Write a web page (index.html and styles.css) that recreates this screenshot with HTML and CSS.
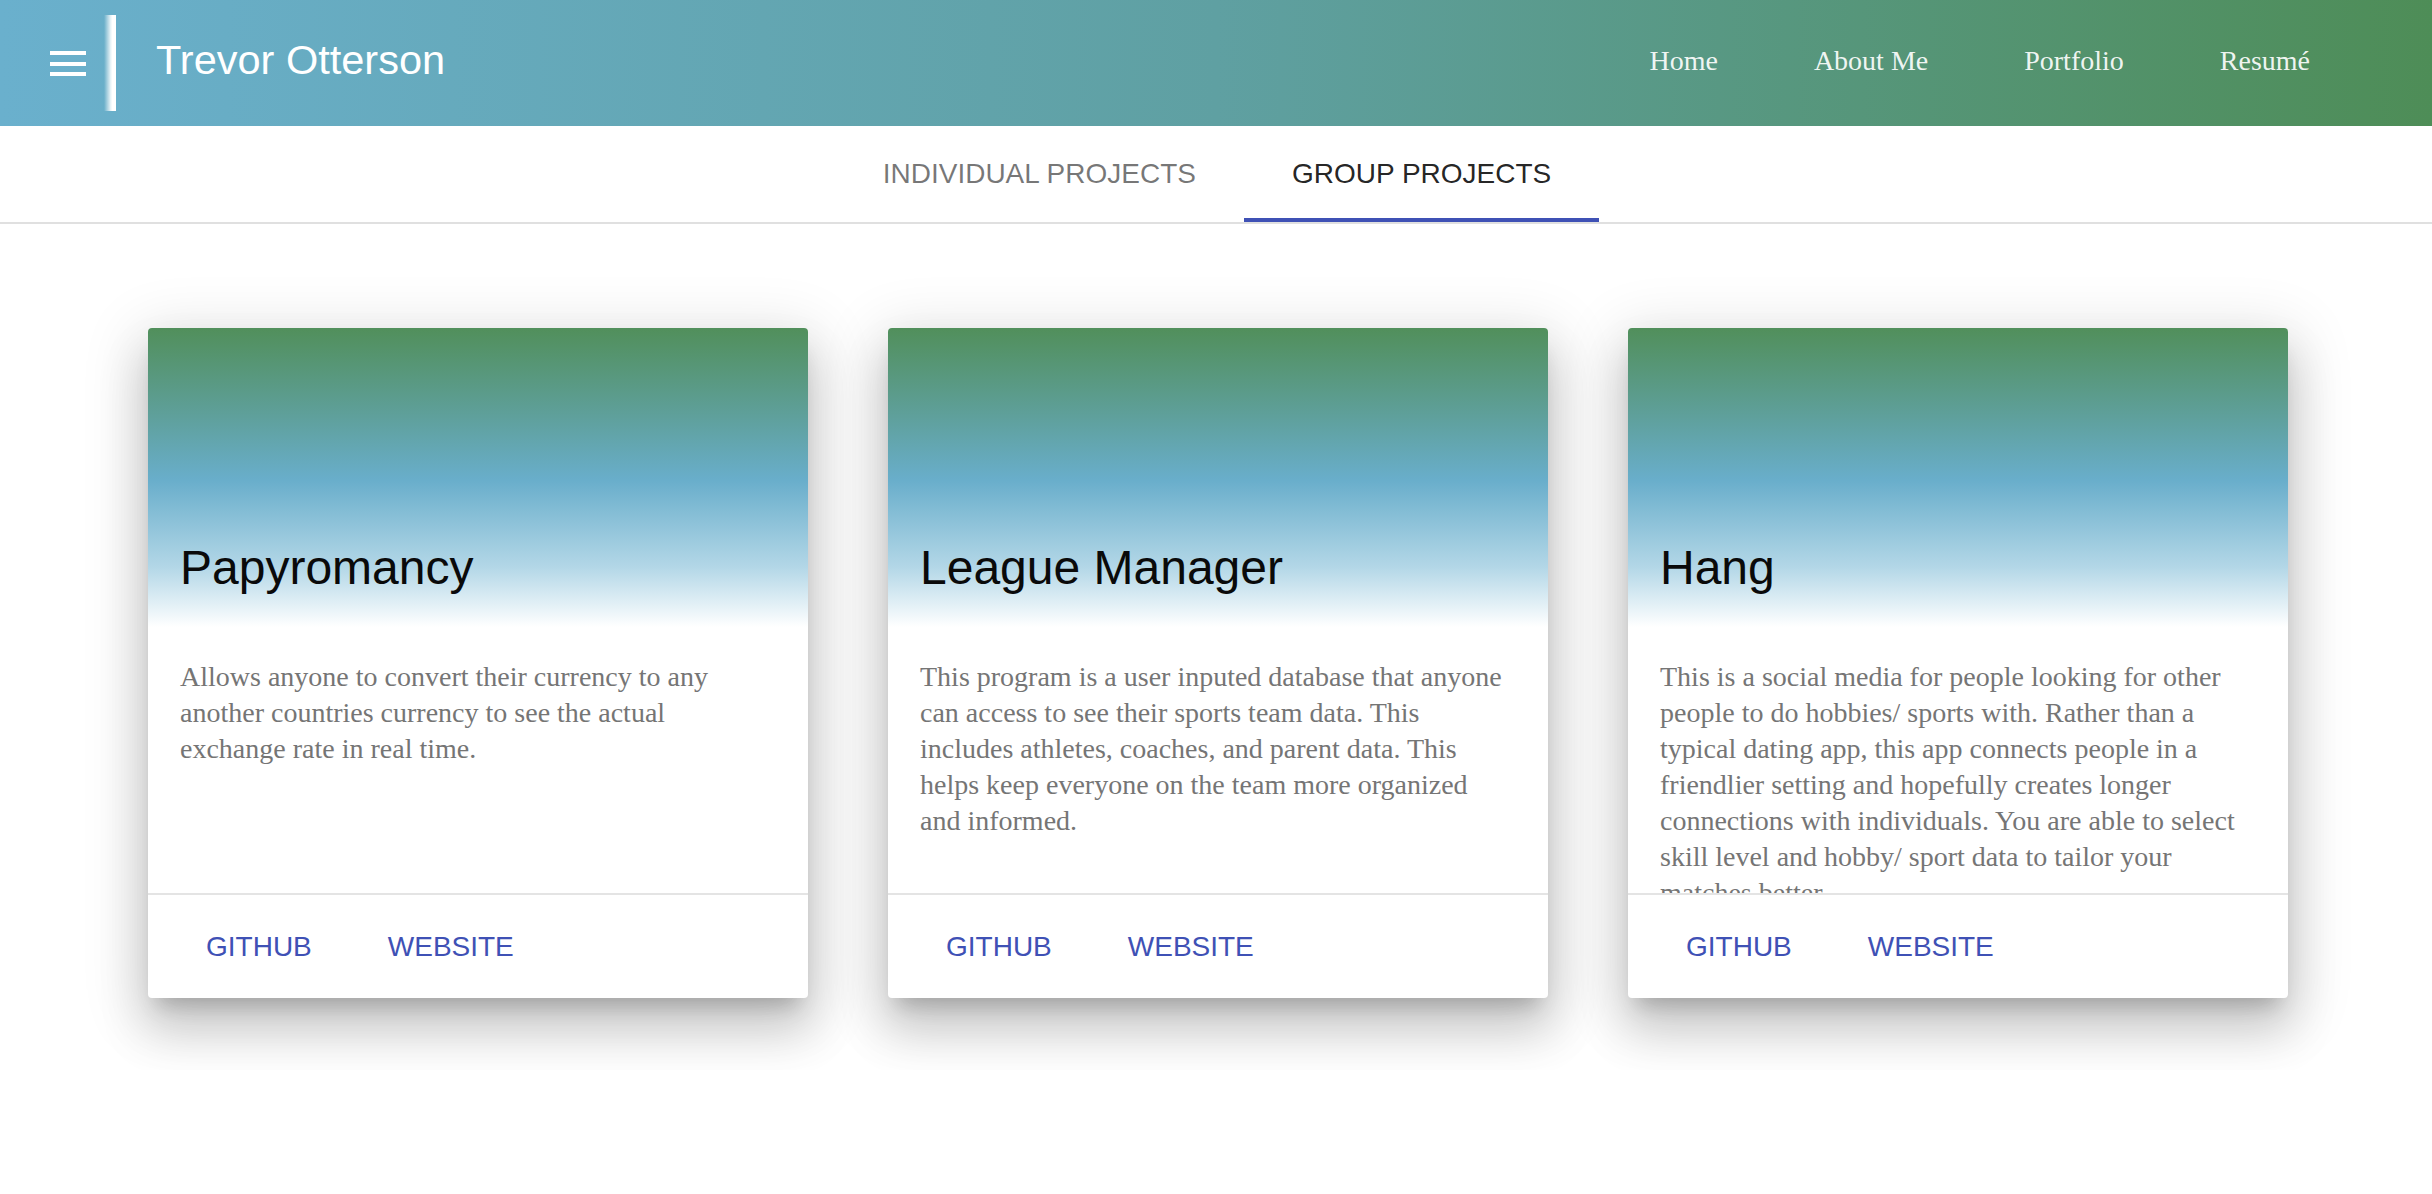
FILE: index.html
```html
<!DOCTYPE html>
<html lang="en">
<head>
<meta charset="utf-8">
<title>Trevor Otterson - Portfolio</title>
<link rel="stylesheet" href="styles.css">
</head>
<body>
<header class="header">
  <div class="drawer-btn">
    <svg class="menu-icon" width="36" height="26" viewBox="0 0 36 26" aria-hidden="true">
      <rect x="0" y="0" width="36" height="4" fill="#fff"/>
      <rect x="0" y="11" width="36" height="4" fill="#fff"/>
      <rect x="0" y="21" width="36" height="4" fill="#fff"/>
    </svg>
  </div>
  <div class="drawer-bar"></div>
  <div class="site-title">Trevor Otterson</div>
  <nav class="nav">
    <a class="nav-link" href="#">Home</a>
    <a class="nav-link" href="#">About Me</a>
    <a class="nav-link" href="#">Portfolio</a>
    <a class="nav-link" href="#">Resumé</a>
  </nav>
</header>

<div class="tabbar">
  <div class="tab">Individual Projects</div>
  <div class="tab tab-active">Group Projects</div>
</div>

<section class="cards">
  <article class="card">
    <div class="card-title"><h2 class="card-title-text">Papyromancy</h2></div>
    <div class="card-text">Allows anyone to convert their currency to any another countries currency to see the actual exchange rate in real time.</div>
    <div class="card-actions">
      <a class="btn" href="#">Github</a>
      <a class="btn" href="#">Website</a>
    </div>
  </article>
  <article class="card">
    <div class="card-title"><h2 class="card-title-text">League Manager</h2></div>
    <div class="card-text">This program is a user inputed database that anyone can access to see their sports team data. This includes athletes, coaches, and parent data. This helps keep everyone on the team more organized and informed.</div>
    <div class="card-actions">
      <a class="btn" href="#">Github</a>
      <a class="btn" href="#">Website</a>
    </div>
  </article>
  <article class="card">
    <div class="card-title"><h2 class="card-title-text">Hang</h2></div>
    <div class="card-text">This is a social media for people looking for other people to do hobbies/ sports with. Rather than a typical dating app, this app connects people in a friendlier setting and hopefully creates longer connections with individuals. You are able to select skill level and hobby/ sport data to tailor your matches better.</div>
    <div class="card-actions">
      <a class="btn" href="#">Github</a>
      <a class="btn" href="#">Website</a>
    </div>
  </article>
</section>
</body>
</html>
```

FILE: styles.css
```css
* { box-sizing: border-box; }

html, body {
  margin: 0;
  padding: 0;
  background: #fff;
}

body {
  font-family: "Liberation Sans", Arial, sans-serif;
}

/* Header */
.header {
  height: 126px;
  display: flex;
  align-items: center;
  padding-right: 74px;
  background: linear-gradient(to right, #6ab0cd 0%, #5fa0a2 50%, #4e8d57 100%);
  color: #fff;
}

.drawer-btn {
  width: 104px;
  height: 96px;
  display: flex;
  align-items: center;
  padding-left: 50px;
}

.menu-icon {
  display: block;
  margin-top: 1px;
}

.drawer-bar {
  width: 12px;
  height: 96px;
  background: linear-gradient(to right, rgba(255,255,255,0) 0%, rgba(255,255,255,0.85) 55%, #fff 70%, #fff 100%);
}

.site-title {
  margin-left: 40px;
  font-size: 41.5px;
  line-height: 1;
  color: #fff;
  padding-bottom: 7px;
}

.nav {
  margin-left: auto;
  display: flex;
  align-items: center;
}

.nav-link {
  padding: 0 48px 5px;
  font-family: "Liberation Serif", "Times New Roman", serif;
  font-size: 28px;
  color: rgba(255,255,255,0.92);
  text-decoration: none;
  line-height: 1;
}

/* Tabs */
.tabbar {
  display: flex;
  justify-content: center;
  height: 98px;
  border-bottom: 2px solid #e0e0e0;
  padding-left: 2px;
}

.tab {
  height: 96px;
  padding: 0 48px;
  display: flex;
  align-items: center;
  font-size: 28px;
  text-transform: uppercase;
  color: rgba(0,0,0,0.54);
  border-bottom: 4px solid transparent;
  padding-top: 4px;
}

.tab-active {
  color: rgba(0,0,0,0.87);
  border-bottom-color: #3f51b5;
}

/* Cards */
.cards {
  display: flex;
  justify-content: center;
  gap: 80px;
  padding: 104px 0 72px 4px;
  overflow: hidden;
}

.card {
  width: 660px;
  height: 670px;
  display: flex;
  flex-direction: column;
  background: #fff;
  border-radius: 4px;
  overflow: hidden;
  box-shadow:
    0 32px 48px 4px rgba(0,0,0,0.14),
    0 12px 60px 10px rgba(0,0,0,0.12),
    0 16px 20px -10px rgba(0,0,0,0.2);
}

.card-title {
  height: 299px;
  flex: none;
  display: flex;
  align-items: flex-end;
  padding: 32px;
  background: linear-gradient(to bottom, #518f5b 0%, #5e9f98 28%, #69aecb 51%, #b3d7e7 80%, #ffffff 100%);
}

.card-title-text {
  margin: 0;
  font-size: 48px;
  font-weight: normal;
  color: #0a0a0a;
  line-height: normal;
}

.card-text {
  flex: 1;
  overflow: hidden;
  padding: 32px 0 0 32px;
  width: 622px;
  font-family: "Liberation Serif", "Times New Roman", serif;
  font-size: 28px;
  line-height: 36px;
  color: #757575;
}

.card-actions {
  flex: none;
  height: 105px;
  border-top: 2px solid #e4e4e4;
  display: flex;
  align-items: center;
  padding-left: 58px;
  gap: 76px;
}

.btn {
  font-size: 28px;
  color: #3f51b5;
  text-decoration: none;
  text-transform: uppercase;
  line-height: 1;
}
```
